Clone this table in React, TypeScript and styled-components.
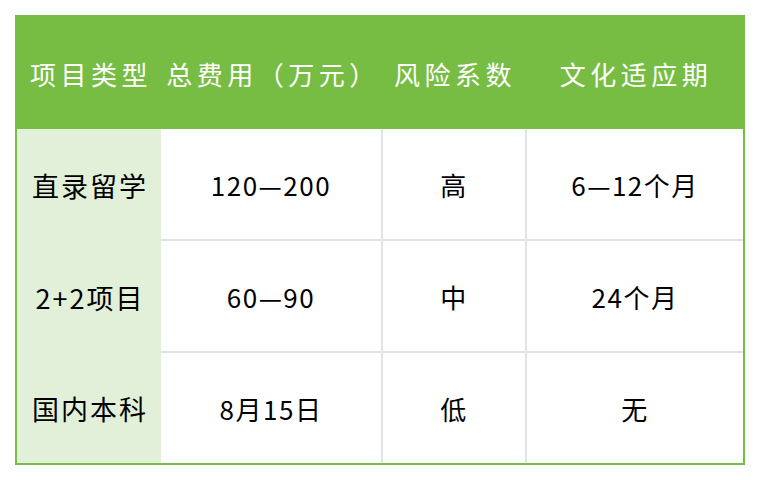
import styled, { createGlobalStyle } from "styled-components";

const GlobalStyle = createGlobalStyle`
  body {
    margin: 0;
    padding: 15px;
    background: #ffffff;
    font-family: "Noto Sans CJK SC", "Noto Sans", sans-serif;
  }
`;

const Table = styled.div`
  width: 730px;
  box-sizing: border-box;
  border: 2px solid #77bc43;
  display: grid;
  grid-template-columns: 144px 220px 144px 218px;
  grid-template-rows: 112px 112px 112px 110px;
`;

const HeadCell = styled.div`
  background: #77bc43;
  color: #ffffff;
  font-size: 26px;
  letter-spacing: 4.5px;
  display: flex;
  align-items: center;
  justify-content: center;
  padding-left: 4px;
`;

const LabelCell = styled.div`
  background: #e3f0d9;
  color: #000000;
  font-size: 27px;
  letter-spacing: 2px;
  display: flex;
  align-items: center;
  justify-content: center;
  padding-left: 2px;
`;

const ValueCell = styled.div<{ $divider: boolean; $last: boolean }>`
  box-sizing: border-box;
  background: #ffffff;
  color: #000000;
  font-size: 26px;
  letter-spacing: 1.5px;
  display: flex;
  align-items: center;
  justify-content: center;
  border-left: ${(p) => (p.$divider ? "2px solid #e3e3e3" : "none")};
  border-bottom: ${(p) => (p.$last ? "none" : "2px solid #e3e3e3")};
`;

const headers = ["项目类型", "总费用（万元）", "风险系数", "文化适应期"];

const rows = [
  { label: "直录留学", values: ["120—200", "高", "6—12个月"] },
  { label: "2+2项目", values: ["60—90", "中", "24个月"] },
  { label: "国内本科", values: ["8月15日", "低", "无"] },
];

export default function App() {
  return (
    <>
      <GlobalStyle />
      <Table>
        {headers.map((h) => (
          <HeadCell key={h}>{h}</HeadCell>
        ))}
        {rows.map((row, ri) => [
          <LabelCell key={row.label}>{row.label}</LabelCell>,
          ...row.values.map((v, vi) => (
            <ValueCell
              key={row.label + vi}
              $divider={vi > 0}
              $last={ri === rows.length - 1}
            >
              {v}
            </ValueCell>
          )),
        ])}
      </Table>
    </>
  );
}
